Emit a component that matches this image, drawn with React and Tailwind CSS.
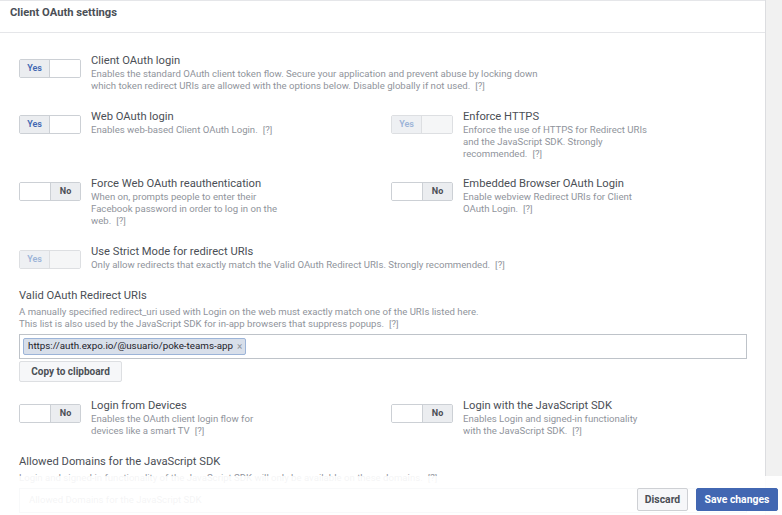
import React from "react";

function Q() {
  return <span className="ml-[5px] text-[#90949c]">[?]</span>;
}

function Toggle({ on, dim }) {
  if (on) {
    return (
      <div className={`flex h-[19px] w-[62px] shrink-0 overflow-hidden rounded-[2px] border ${dim ? "border-[#dddfe2]" : "border-[#ccd0d5]"}`}>
        <div
          className={`flex w-[30px] items-center justify-center border-r text-[9px] font-semibold ${
            dim ? "border-[#dddfe2] bg-[#eef0f3] text-[#9cb4d8]" : "border-[#ccd0d5] bg-[#ebedf0] text-[#4267b2]"
          }`}
        >
          Yes
        </div>
        <div className={`flex-1 ${dim ? "bg-[#f5f6f7]" : "bg-white"}`}></div>
      </div>
    );
  }
  return (
    <div className="flex h-[19px] w-[62px] shrink-0 overflow-hidden rounded-[2px] border border-[#ccd0d5]">
      <div className="flex-1 border-r border-[#ccd0d5] bg-white"></div>
      <div className="flex w-[29px] items-center justify-center bg-[#ebedf0] text-[9px] font-bold text-[#4b4f56]">No</div>
    </div>
  );
}

function Setting({ on, dim, title, wide, children }) {
  return (
    <div className={`flex gap-[10px] ${wide ? "" : "w-[372px]"}`}>
      <div className="pt-[6px]">
        <Toggle on={on} dim={dim} />
      </div>
      <div>
        <div className="text-[11.2px] leading-[15px] text-[#4b4f56]">{title}</div>
        <div className="text-[9.6px] leading-[12px] text-[#90949c]">{children}</div>
      </div>
    </div>
  );
}

export default function App() {
  return (
    <div className="relative h-[515px] w-[782px] overflow-hidden bg-[#f1f1f1] font-['Roboto','Liberation_Sans',sans-serif]">
      <div className="flex h-full">
        <div className="h-full w-[766px] border-r border-[#dcdde0] bg-white">
          {/* Header */}
          <div className="h-[33px] border-t border-b border-[#e5e6e9] pl-[10px] pt-[4px] text-[11.2px] font-bold leading-[16px] text-[#4b4f56]">
            Client OAuth settings
          </div>

          <div className="pl-[19px] pt-[20px]">
            <Setting on wide title="Client OAuth login">
              Enables the standard OAuth client token flow. Secure your application and prevent abuse by locking down
              <br />
              which token redirect URIs are allowed with the options below. Disable globally if not used.
              <Q />
            </Setting>

            <div className="mt-[17px] flex">
              <Setting on title="Web OAuth login">
                Enables web-based Client OAuth Login.
                <Q />
              </Setting>
              <Setting on dim title="Enforce HTTPS">
                Enforce the use of HTTPS for Redirect URIs
                <br />
                and the JavaScript SDK. Strongly
                <br />
                recommended.
                <Q />
              </Setting>
            </div>

            <div className="mt-[16px] flex">
              <Setting title="Force Web OAuth reauthentication">
                When on, prompts people to enter their
                <br />
                Facebook password in order to log in on the
                <br />
                web.
                <Q />
              </Setting>
              <Setting title="Embedded Browser OAuth Login">
                Enable webview Redirect URIs for Client
                <br />
                OAuth Login.
                <Q />
              </Setting>
            </div>

            <div className="mt-[17px]">
              <Setting on dim wide title="Use Strict Mode for redirect URIs">
                Only allow redirects that exactly match the Valid OAuth Redirect URIs. Strongly recommended.
                <Q />
              </Setting>
            </div>

            {/* Redirect URIs */}
            <div className="mt-[17px] text-[11.2px] leading-[15px] text-[#4b4f56]">Valid OAuth Redirect URIs</div>
            <div className="mt-[3px] text-[9.6px] leading-[12px] text-[#90949c]">
              A manually specified redirect_uri used with Login on the web must exactly match one of the URIs listed here.
              <br />
              This list is also used by the JavaScript SDK for in-app browsers that suppress popups.
              <Q />
            </div>
            <div className="mt-[4px] flex h-[25px] w-[728px] items-center border border-[#bec3c9] px-[3px]">
              <div className="flex h-[17px] items-center gap-[4px] rounded-[2px] border border-[#9cb4d8] bg-[#d8dfea] pl-[4px] pr-[3px] text-[9.8px] text-[#1d2129]">
                <span>https://auth.expo.io/@usuario/poke-teams-app</span>
                <span className="text-[10px] text-[#90949c]">×</span>
              </div>
            </div>
            <button className="mt-[2px] flex h-[21px] w-[103px] items-center justify-center rounded-[2px] border border-[#dddfe2] bg-[#f6f7f9] text-[10px] font-bold text-[#4b4f56]">
              Copy to clipboard
            </button>

            <div className="mt-[16px] flex">
              <Setting title="Login from Devices">
                Enables the OAuth client login flow for
                <br />
                devices like a smart TV
                <Q />
              </Setting>
              <Setting title="Login with the JavaScript SDK">
                Enables Login and signed-in functionality
                <br />
                with the JavaScript SDK.
                <Q />
              </Setting>
            </div>

            {/* Allowed domains */}
            <div className="mt-[17px] text-[11.2px] leading-[15px] text-[#4b4f56]">Allowed Domains for the JavaScript SDK</div>
            <div className="mt-[3px] text-[9.6px] leading-[12px] text-[#90949c]">
              Login and signed-in functionality of the JavaScript SDK will only be available on these domains.
              <Q />
            </div>
            <div className="mt-[4px] flex h-[25px] w-[728px] items-center border border-[#bec3c9] px-[9px] text-[9.6px] text-[#90949c]">
              Allowed Domains for the JavaScript SDK
            </div>
          </div>
        </div>
        <div className="flex-1"></div>
      </div>

      {/* Sticky footer */}
      <div className="absolute bottom-0 left-0 right-0 flex h-[39px] items-start justify-end gap-[8px] bg-white/90 pr-[4px] pt-[12px]">
        <button className="flex h-[23px] w-[51px] items-center justify-center rounded-[2px] border border-[#ced0d4] bg-[#f6f7f9] text-[10.4px] font-bold text-[#4b4f56]">
          Discard
        </button>
        <button className="flex h-[23px] w-[82px] items-center justify-center rounded-[2px] border border-[#4267b2] bg-[#4267b2] text-[10.4px] font-bold text-white">
          Save changes
        </button>
      </div>
    </div>
  );
}
